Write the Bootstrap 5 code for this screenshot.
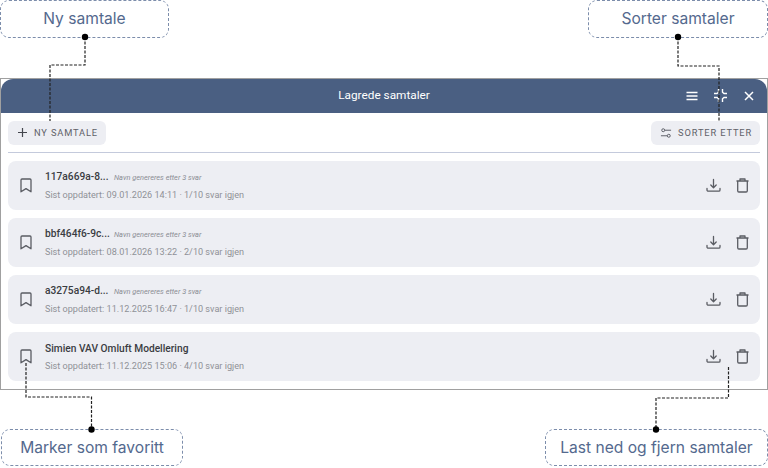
<!DOCTYPE html>
<html lang="en">

<head>
  <meta charset="UTF-8" />
  <meta name="viewport" content="width=device-width, initial-scale=1.0" />
  <title>Lagrede samtaler</title>
  <link href="https://cdn.jsdelivr.net/npm/bootstrap@5.3.0/dist/css/bootstrap.min.css" rel="stylesheet" />
  <style>
    html, body {
      height: 468px;
      overflow: hidden;
      background: #fff;
    }

    .page-wrap {
      width: 768px;
      height: 468px;
      position: relative;
      padding-bottom: 1px;
    }

    .callout {
      height: 37.5px;
      border: 1.5px dashed #7c8dab;
      border-radius: 9px;
      color: #54698e;
      font-family: Inter, sans-serif;
      font-size: 15.6px;
    }

    .callout-ny { width: 169px; }
    .callout-sort { width: 180px; }
    .callout-fav { width: 182px; margin-left: 1px; }
    .callout-last { width: 223px; }

    .top-row { height: 78px; }
    .bottom-row { height: 77px; padding-top: 38.5px; }

    .chat-window {
      height: 313px;
      border: 1px solid #a0a0a0;
      font-family: Roboto, sans-serif;
    }

    .window-head {
      height: 34px;
      background: #4a5f82;
      color: #fff;
      font-size: 11.8px;
      font-weight: 400;
      border-radius: 12px 12px 0 0;
    }

    .head-title { left: 0; right: 0; text-align: center; position: absolute; }
    .head-icons { margin-left: auto; gap: 14px; padding-right: 11px; position: relative; }

    .tool-btn {
      height: 24px;
      background: #edeef3;
      color: #5f6168;
      border-radius: 6px;
      font-size: 9.3px;
      font-weight: 400;
      letter-spacing: .85px;
      padding: 0 8px 0 9px;
      gap: 6px;
    }

    .tool-row { padding: 8px 7px 7px; }
    .split-line { height: 1px; margin: 0 7px; background: #c4cadc; }
    .chat-list { padding: 8px 7px 0; gap: 8px; }

    .chat-row {
      height: 49px;
      background: #edeef3;
      border-radius: 8px;
      padding: 0 11px 0 12px;
    }

    .chat-text { margin-left: 13px; padding-top: 2px; }
    .chat-name { font-size: 10.2px; font-weight: 500; color: #3a3c42; line-height: 13px; }
    .chat-id { display: inline-block; width: 69px; }
    .chat-note { font-size: 7.4px; font-style: italic; color: #8b8d94; font-weight: 400; }
    .chat-date { font-size: 9.1px; color: #8f9197; line-height: 13px; margin-top: 5px; }
    .row-icons { margin-left: auto; gap: 15px; }

    .lines-overlay {
      position: absolute;
      left: 0;
      top: 0;
      pointer-events: none;
    }
  </style>
</head>

<body>
  <div class="page-wrap d-flex flex-column">
    <div class="top-row d-flex justify-content-between align-items-start">
      <div class="callout callout-ny d-flex align-items-center justify-content-center">Ny samtale</div>
      <div class="callout callout-sort d-flex align-items-center justify-content-center">Sorter samtaler</div>
    </div>

    <div class="chat-window d-flex flex-column">
      <div class="window-head d-flex align-items-center position-relative">
        <div class="head-title">Lagrede samtaler</div>
        <div class="head-icons d-flex align-items-center">
          <svg width="14" height="14" viewBox="0 0 14 14" fill="none" stroke="#fff" stroke-width="1.5"><path d="M1.5 3.5h11M1.5 7h11M1.5 10.5h11" /></svg>
          <svg width="15" height="15" viewBox="0 0 15 15" fill="none" stroke="#fff" stroke-width="1.4"><path d="M5.5 1v3.2L4 5.5H1M9.5 1v3.2L11 5.5h3M5.5 14v-3.2L4 9.5H1M9.5 14v-3.2L11 9.5h3" /></svg>
          <svg width="14" height="14" viewBox="0 0 14 14" fill="none" stroke="#fff" stroke-width="1.5"><path d="M3 3l8 8M11 3l-8 8" /></svg>
        </div>
      </div>

      <div class="tool-row d-flex justify-content-between">
        <div class="tool-btn d-flex align-items-center">
          <svg width="11" height="11" viewBox="0 0 11 11" fill="none" stroke="#44464d" stroke-width="1.2"><path d="M5.5 1v9M1 5.5h9" /></svg>
          <span>NY SAMTALE</span>
        </div>
        <div class="tool-btn d-flex align-items-center">
          <svg width="12" height="12" viewBox="0 0 13 12" fill="none" stroke="#55575f" stroke-width="1"><circle cx="3.5" cy="3" r="1.6" /><path d="M5.2 3h6.8M1 9h6.8" /><circle cx="9.5" cy="9" r="1.6" /></svg>
          <span>SORTER ETTER</span>
        </div>
      </div>
      <div class="split-line"></div>

      <div class="chat-list d-flex flex-column" id="chat-list"></div>
    </div>

    <div class="bottom-row d-flex justify-content-between align-items-start">
      <div class="callout callout-fav d-flex align-items-center justify-content-center">Marker som favoritt</div>
      <div class="callout callout-last d-flex align-items-center justify-content-center">Last ned og fjern samtaler</div>
    </div>

    <svg class="lines-overlay" width="768" height="468" fill="none" stroke="#222" stroke-width="1.2" stroke-dasharray="3 1.5">
      <path d="M85 37V65H50V121" />
      <path d="M678 37V66H719V121" />
      <path d="M26 363V397H91.5V430" />
      <path d="M728.5 367V398H656V430" />
      <g fill="#000" stroke="none">
        <circle cx="85" cy="37" r="3.2" />
        <circle cx="678" cy="37" r="3.2" />
        <circle cx="91.5" cy="429.5" r="3.2" />
        <circle cx="656" cy="429.5" r="3.2" />
      </g>
    </svg>
  </div>

  <script src="https://cdn.jsdelivr.net/npm/bootstrap@5.3.0/dist/js/bootstrap.bundle.min.js"></script>
  <script>
    const chats = [
      { name: '117a669a-8...', note: true, date: '09.01.2026 14:11', left: '1/10' },
      { name: 'bbf464f6-9c...', note: true, date: '08.01.2026 13:22', left: '2/10' },
      { name: 'a3275a94-d...', note: true, date: '11.12.2025 16:47', left: '1/10' },
      { name: 'Simien VAV Omluft Modellering', note: false, date: '11.12.2025 15:06', left: '4/10' }
    ];

    const bookmarkIcon = '<svg width="12" height="15" viewBox="0 0 12 15" fill="none" stroke="#5a5c63" stroke-width="1.3" stroke-linejoin="round"><path d="M2 1h8a1 1 0 0 1 1 1V13.8L6 10.6 1 13.8V2a1 1 0 0 1 1-1z" /></svg>';
    const downloadIcon = '<svg width="15" height="15" viewBox="0 0 15 15" fill="none" stroke="#5a5c63" stroke-width="1.3" stroke-linecap="round" stroke-linejoin="round"><path d="M7.5 1.5v8M4.8 7l2.7 2.7L10.2 7M1 10.5v1.5a1.2 1.2 0 0 0 1.2 1.2h10.6A1.2 1.2 0 0 0 14 12v-1.5" /></svg>';
    const trashIcon = '<svg width="13" height="15" viewBox="0 0 13 15" fill="none" stroke="#5a5c63" stroke-width="1.3" stroke-linejoin="round"><path d="M.5 3h12M4 3V1h5v2M1.7 3v9.8a1.2 1.2 0 0 0 1.2 1.2h7.2a1.2 1.2 0 0 0 1.2-1.2V3" /></svg>';

    function chatTitle(chat) {
      if (!chat.note) return chat.name;
      return `<span class="chat-id">${chat.name}</span><span class="chat-note">Navn genereres etter 3 svar</span>`;
    }

    document.getElementById('chat-list').innerHTML = chats.map(chat => `
      <div class="chat-row d-flex align-items-center">
        ${bookmarkIcon}
        <div class="chat-text">
          <div class="chat-name">${chatTitle(chat)}</div>
          <div class="chat-date">Sist oppdatert: ${chat.date} · ${chat.left} svar igjen</div>
        </div>
        <div class="row-icons d-flex align-items-center">${downloadIcon}${trashIcon}</div>
      </div>
    `).join('');
  </script>
</body>

</html>
